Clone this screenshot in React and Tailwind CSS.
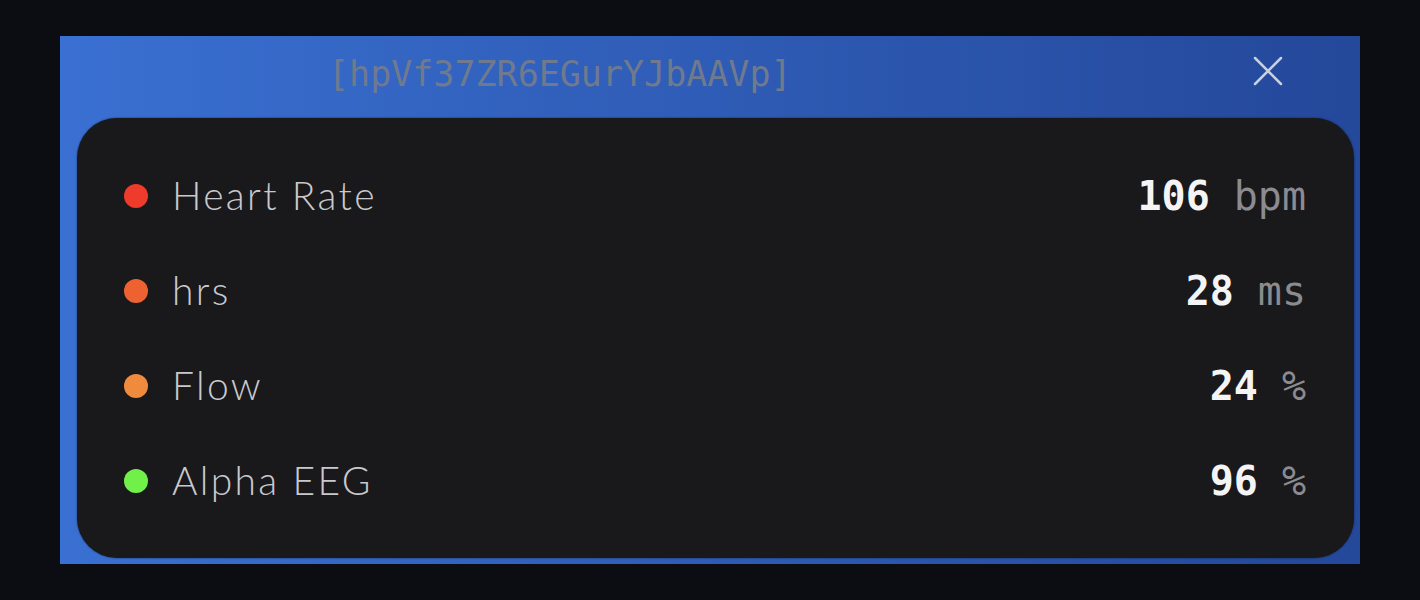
const rows = [
  { label: 'Heart Rate', dot: 'bg-[#ee3b2c]', value: '106', unit: 'bpm' },
  { label: 'hrs', dot: 'bg-[#ee6232]', value: '28', unit: 'ms' },
  { label: 'Flow', dot: 'bg-[#f08a3c]', value: '24', unit: '%' },
  { label: 'Alpha EEG', dot: 'bg-[#72f04a]', value: '96', unit: '%' },
]

export default function App() {
  return (
    <div className="min-h-[600px] w-full bg-[#0b0d12] px-[60px] pt-[36px]">
      <div className="flex h-[528px] flex-col bg-gradient-to-r from-[#3a70d2] to-[#24489a]">
        {/* header */}
        <div className="flex h-[82px] items-center pl-[268px] pr-[76px]">
          <span className="flex-1 pb-[6px] font-['DejaVu_Sans_Mono',monospace] text-[35px] text-[#6f7a8e]">
            [hpVf37ZR6EGurYJbAAVp]
          </span>
          <svg className="mb-[12px] h-[32px] w-[32px]" viewBox="0 0 32 32" fill="none">
            <path d="M3 3L29 29M29 3L3 29" stroke="#c9d1e0" strokeWidth="2.5" strokeLinecap="round" />
          </svg>
        </div>

        {/* metrics card */}
        <div className="ml-[17px] mr-[6px] mb-[6px] flex-1 rounded-[40px] bg-[#19181b] py-[30px] pl-[47px] pr-[48px] shadow-[0_0_2px_rgba(0,0,0,0.6)]">
          {rows.map(row => (
            <div key={row.label} className="flex h-[95px] items-center">
              <div className={`h-[24px] w-[24px] rounded-full ${row.dot}`}></div>
              <span className="ml-[24px] flex-1 font-['Lato',sans-serif] text-[39px] font-light tracking-[0.06em] text-[#c9c9cd]">
                {row.label}
              </span>
              <span className="font-['DejaVu_Sans_Mono',monospace] text-[40px] font-semibold text-[#f4f4f5]">
                {row.value}
              </span>
              <span className="ml-[24px] font-['DejaVu_Sans_Mono',monospace] text-[40px] text-[#8b8b90]">
                {row.unit}
              </span>
            </div>
          ))}
        </div>
      </div>
    </div>
  )
}
